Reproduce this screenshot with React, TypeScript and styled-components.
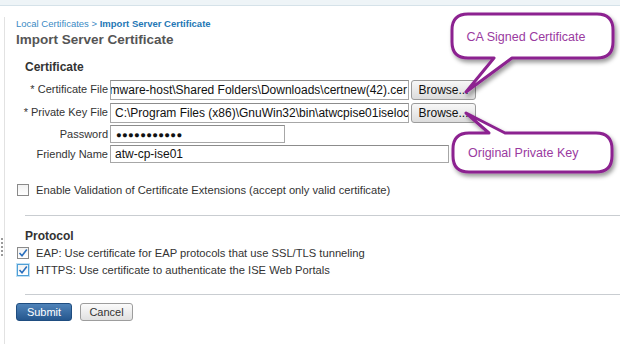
import React from "react";
import styled, { createGlobalStyle } from "styled-components";

const GlobalStyle = createGlobalStyle`
  html, body { margin: 0; padding: 0; background: #ffffff; }
  body { font-family: "Liberation Sans", Arial, sans-serif; color: #333; }
  * { box-sizing: border-box; }
`;

const Page = styled.div`
  position: relative;
  width: 620px;
  height: 344px;
  overflow: hidden;
  background: #fff;
`;

const TopStrip = styled.div`
  height: 6px;
  background: #eef4f7;
  border-bottom: 1px solid #d5e2e9;
`;

const Body = styled.div`
  display: flex;
  padding-left: 4px;
  padding-top: 11px;
`;

const Panel = styled.div`
  flex: 1;
  display: flex;
  flex-direction: column;
  border-left: 1px solid #e2e2e2;
  padding-left: 11px;
  min-height: 327px;
`;

const Breadcrumb = styled.div`
  font-size: 9.5px;
  line-height: 12px;
  height: 12px;
  margin-top: 1px;
  color: #3a8ac4;
  white-space: nowrap;
`;

const CrumbCurrent = styled.span`
  font-weight: bold;
  color: #2477b5;
`;

const Title = styled.h1`
  margin: 1px 0 0;
  font-size: 13.5px;
  line-height: 18px;
  font-weight: bold;
  color: #555;
`;

const SectionTitle = styled.h2<{ $top: number }>`
  margin: ${(p) => p.$top}px 0 0 9px;
  font-size: 12px;
  line-height: 15px;
  font-weight: bold;
  color: #333;
`;

const FormGrid = styled.div`
  display: grid;
  grid-template-columns: 92px auto;
  grid-auto-rows: auto;
  column-gap: 2px;
  row-gap: 2px;
  margin-top: 4px;
  align-items: center;
`;

const Label = styled.div<{ $h: number }>`
  height: ${(p) => p.$h}px;
  line-height: ${(p) => p.$h}px;
  font-size: 11px;
  text-align: right;
  color: #333;
  white-space: nowrap;
`;

const FieldRow = styled.div`
  display: flex;
  align-items: flex-start;
  gap: 2px;
`;

const TextBox = styled.div<{ $w: number; $h: number; $end?: boolean }>`
  width: ${(p) => p.$w}px;
  height: ${(p) => p.$h}px;
  border: 1px solid #a7a7a7;
  border-top-color: #8c8c8c;
  background: #fff;
  display: flex;
  align-items: center;
  justify-content: ${(p) => (p.$end ? "flex-end" : "flex-start")};
  padding: 0 ${(p) => (p.$end ? "1px" : "4px")} 0 4px;
  overflow: hidden;
  white-space: nowrap;
  font-size: 12px;
  color: #111;
`;

const Dots = styled.span`
  font-size: 9.5px;
  letter-spacing: 0.3px;
  color: #111;
  padding-left: 1px;
`;

const BrowseButton = styled.button`
  width: 65px;
  height: 20px;
  padding: 0;
  border: 1px solid #9b9b9b;
  border-radius: 3px;
  background: linear-gradient(#f7f7f7, #dcdcdc);
  font-family: "Liberation Sans", Arial, sans-serif;
  font-size: 12px;
  color: #111;
`;

const CheckRow = styled.label<{ $top: number }>`
  display: flex;
  align-items: center;
  gap: 7px;
  height: 14px;
  margin: ${(p) => p.$top}px 0 0 1px;
  font-size: 11.2px;
  color: #333;
  white-space: nowrap;
`;

const Box = styled.span<{ $focus?: boolean }>`
  width: 12px;
  height: 12px;
  flex: none;
  display: flex;
  align-items: center;
  justify-content: center;
  border: 1px solid ${(p) => (p.$focus ? "#4f9fd6" : "#8a8a8a")};
  box-shadow: ${(p) => (p.$focus ? "0 0 0 1px #bfe0f5" : "none")};
  background: linear-gradient(#f2f2f2, #ffffff);
`;

const Divider = styled.hr<{ $top: number }>`
  margin: ${(p) => p.$top}px 0 0 9px;
  border: 0;
  border-top: 1px solid #c9cdd1;
  height: 0;
`;

const ButtonBar = styled.div`
  display: flex;
  gap: 8px;
  margin-top: 8px;
`;

const ActionButton = styled.button<{ $primary?: boolean; $w: number }>`
  width: ${(p) => p.$w}px;
  height: 18px;
  padding: 0;
  border-radius: 3px;
  font-family: "Liberation Sans", Arial, sans-serif;
  font-size: 11px;
  border: 1px solid ${(p) => (p.$primary ? "#1f4d80" : "#9d9d9d")};
  color: ${(p) => (p.$primary ? "#ffffff" : "#333333")};
  background: ${(p) =>
    p.$primary
      ? "linear-gradient(#4f83b9, #25578e)"
      : "linear-gradient(#fbfbfb, #e0e0e0)"};
`;

const Grip = styled.div`
  position: absolute;
  left: 1px;
  top: 237px;
  width: 2px;
  height: 20px;
  background-image: radial-gradient(circle, #9a9a9a 0.8px, transparent 1px);
  background-size: 2px 4px;
`;

const Overlay = styled.svg`
  position: absolute;
  left: 0;
  top: 0;
  pointer-events: none;
`;

const Check = () => (
  <svg width="10" height="10" viewBox="0 0 10 10">
    <path d="M1.5 5 L4 7.8 L8.8 1.6" fill="none" stroke="#2a6fbd" strokeWidth="1.6" />
  </svg>
);

export default function App() {
  return (
    <>
      <GlobalStyle />
      <Page>
        <TopStrip />
        <Body>
          <Panel>
            <Breadcrumb>
              Local Certificates &gt; <CrumbCurrent>Import Server Certificate</CrumbCurrent>
            </Breadcrumb>
            <Title>Import Server Certificate</Title>
            <SectionTitle $top={11}>Certificate</SectionTitle>
            <FormGrid>
              <Label $h={21}>* Certificate File</Label>
              <FieldRow>
                <TextBox $w={299} $h={20} $end>
                  \\vmware-host\Shared Folders\Downloads\certnew(42).cer
                </TextBox>
                <BrowseButton>Browse...</BrowseButton>
              </FieldRow>
              <Label $h={21}>* Private Key File</Label>
              <FieldRow>
                <TextBox $w={299} $h={20}>
                  C:\Program Files (x86)\GnuWin32\bin\atwcpise01iselocal.key
                </TextBox>
                <BrowseButton>Browse...</BrowseButton>
              </FieldRow>
              <Label $h={18}>Password</Label>
              <FieldRow>
                <TextBox $w={175} $h={18}>
                  <Dots>●●●●●●●●●●●</Dots>
                </TextBox>
              </FieldRow>
              <Label $h={18}>Friendly Name</Label>
              <FieldRow>
                <TextBox $w={339} $h={18}>atw-cp-ise01</TextBox>
              </FieldRow>
            </FormGrid>
            <CheckRow $top={20}>
              <Box />
              Enable Validation of Certificate Extensions (accept only valid certificate)
            </CheckRow>
            <Divider $top={18} />
            <SectionTitle $top={13}>Protocol</SectionTitle>
            <CheckRow $top={2}>
              <Box>
                <Check />
              </Box>
              EAP: Use certificate for EAP protocols that use SSL/TLS tunneling
            </CheckRow>
            <CheckRow $top={3}>
              <Box $focus>
                <Check />
              </Box>
              HTTPS: Use certificate to authenticate the ISE Web Portals
            </CheckRow>
            <Divider $top={17} />
            <ButtonBar>
              <ActionButton $primary $w={56}>Submit</ActionButton>
              <ActionButton $w={53}>Cancel</ActionButton>
            </ButtonBar>
          </Panel>
        </Body>
        <Grip />
        <Overlay width="620" height="344" viewBox="0 0 620 344">
          <defs>
            <filter id="shadow" x="-20%" y="-20%" width="140%" height="160%">
              <feDropShadow dx="2" dy="3" stdDeviation="2.2" floodColor="#000" floodOpacity="0.4" />
            </filter>
          </defs>
          <path
            d="M468 14 H597 Q613 14 613 30 V42 Q613 58 597 58 H512 L466 92 L494 58 H468 Q452 58 452 42 V30 Q452 14 468 14 Z"
            fill="#fff"
            stroke="#8c2290"
            strokeWidth="3"
            strokeLinejoin="round"
            filter="url(#shadow)"
          />
          <text
            x="526"
            y="41"
            textAnchor="middle"
            fontFamily="Liberation Sans, Arial, sans-serif"
            fontSize="12.5"
            fill="#9a3a9f"
          >
            CA Signed Certificate
          </text>
          <path
            d="M469 133 H489 L466 113 L505 133 H596 Q612 133 612 149 V156 Q612 172 596 172 H469 Q453 172 453 156 V149 Q453 133 469 133 Z"
            fill="#fff"
            stroke="#8c2290"
            strokeWidth="3"
            strokeLinejoin="round"
            filter="url(#shadow)"
          />
          <text
            x="468"
            y="157"
            fontFamily="Liberation Sans, Arial, sans-serif"
            fontSize="12.5"
            fill="#9a3a9f"
          >
            Original Private Key
          </text>
        </Overlay>
      </Page>
    </>
  );
}
